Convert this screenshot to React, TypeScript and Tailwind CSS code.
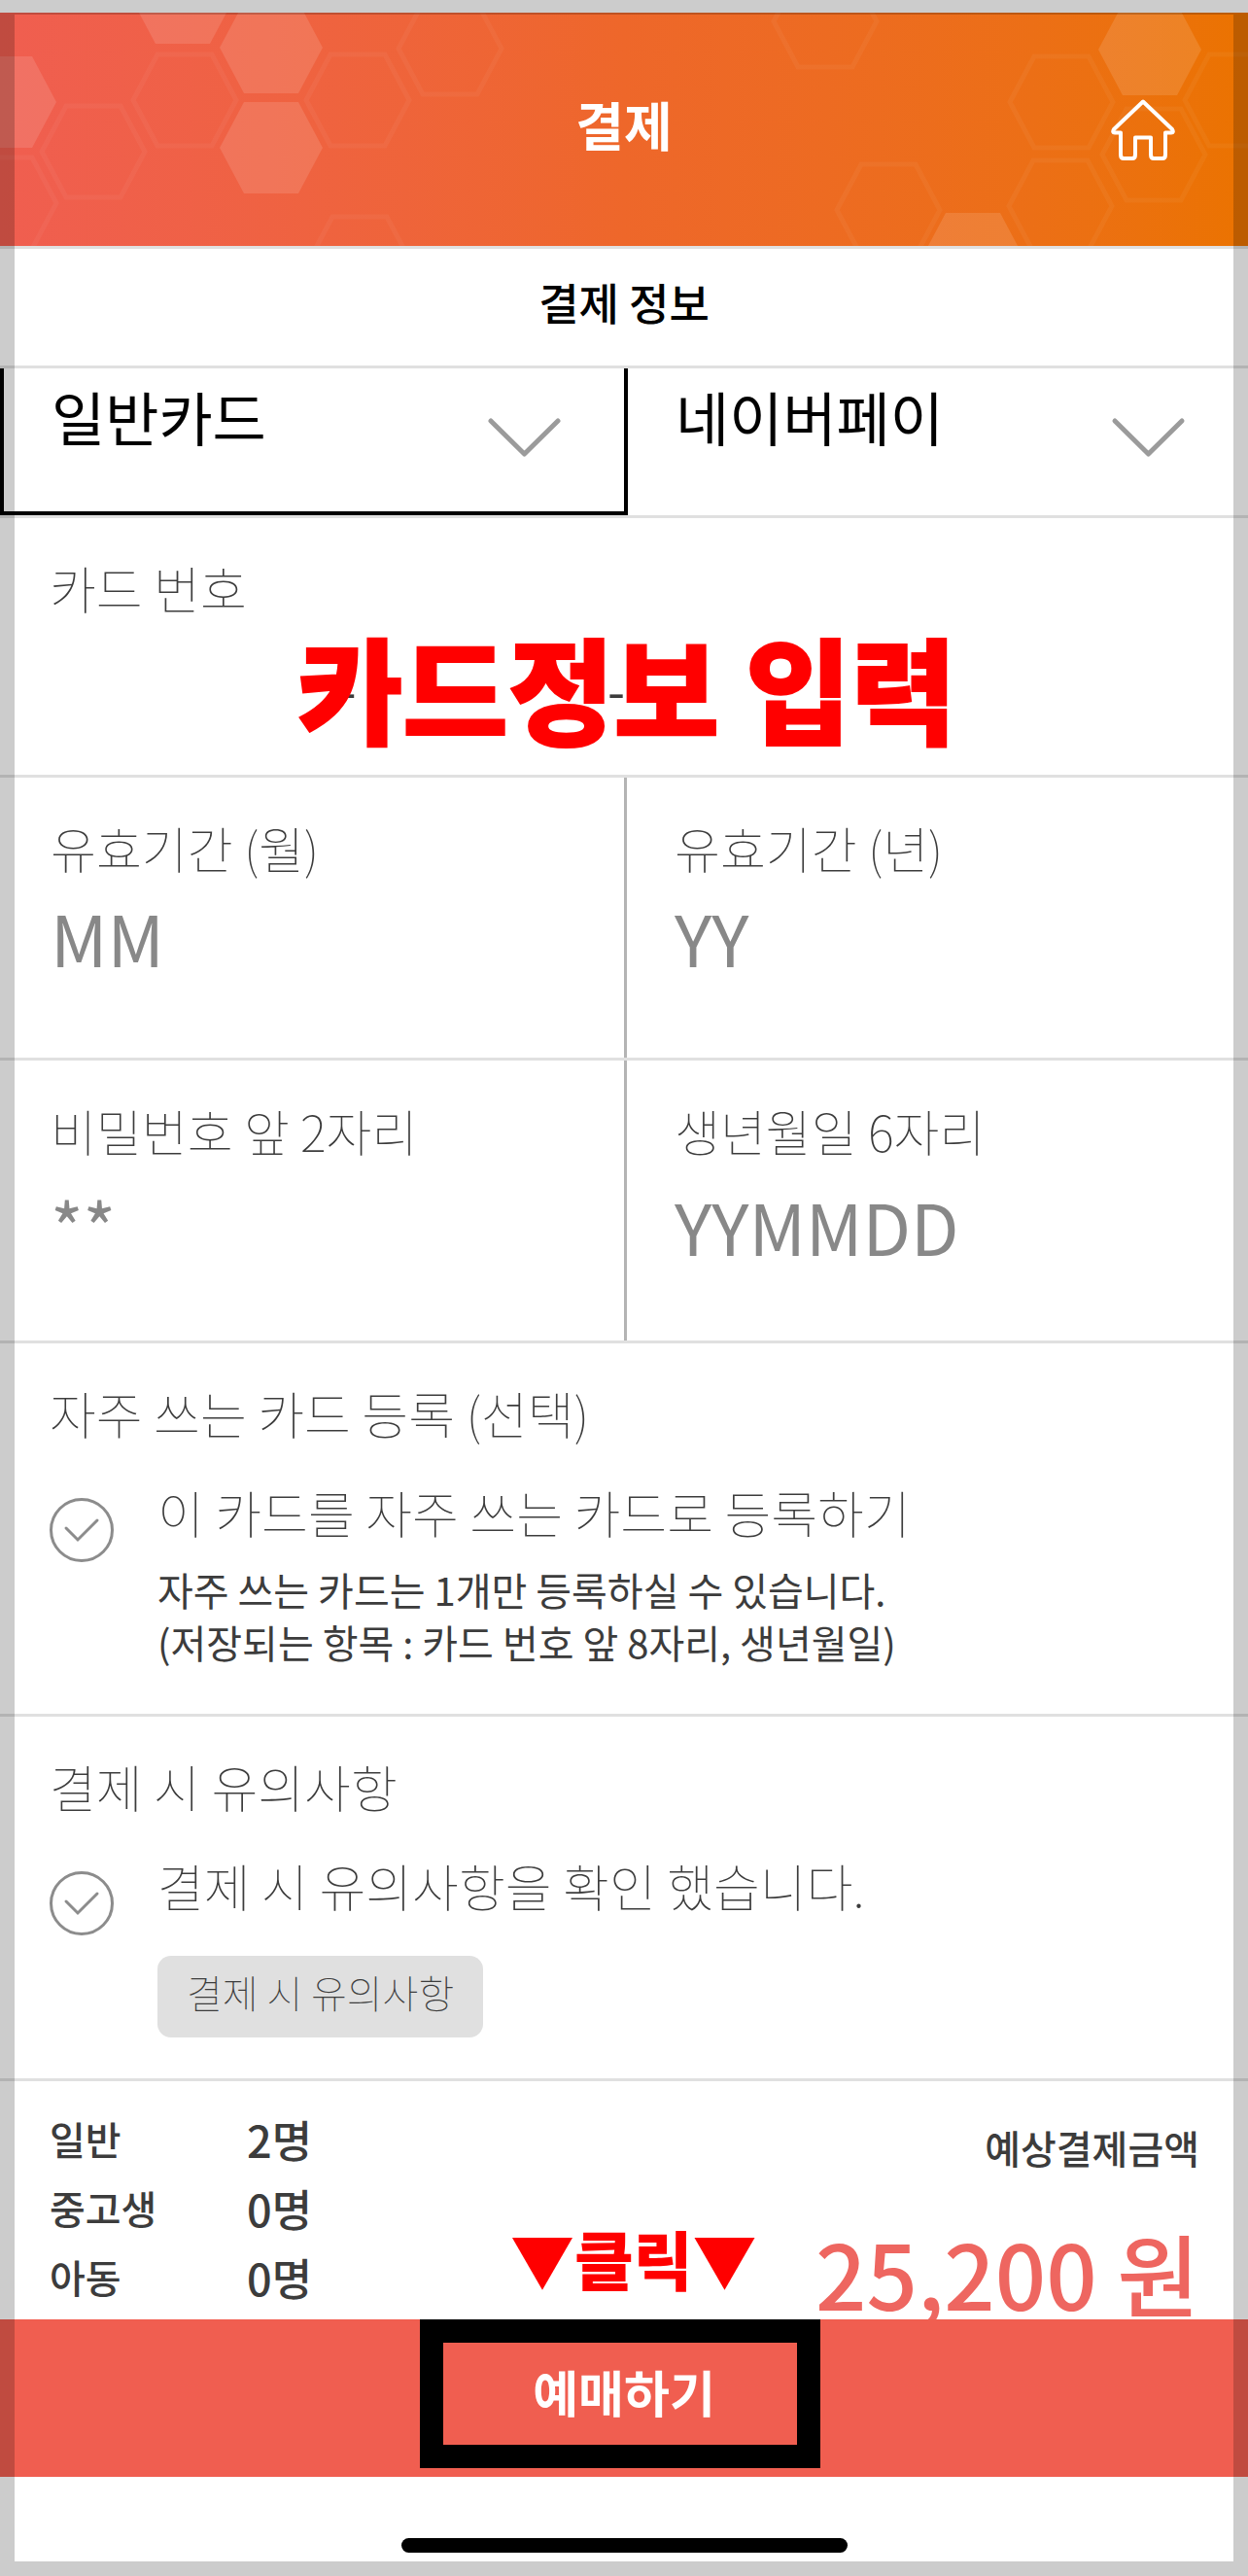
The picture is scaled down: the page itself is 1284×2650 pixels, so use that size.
import { ReactNode, useState } from "react";

const outlineHexagons = [
  [190, 90],
  [96, 143],
  [368, 90],
  [463, 37],
  [370, 257],
  [5, 196],
  [849, 9],
  [1092, 92],
  [914, 203],
  [1091, 199],
  [1187, 146],
  [1272, 90],
];

const filledHexagons = [
  [279, 36],
  [279, 139],
  [188, -15],
  [5, 92],
  [1183, 38],
  [1001, 253],
];

const people = [
  { name: "일반", count: 2 },
  { name: "중고생", count: 0 },
  { name: "아동", count: 0 },
];

const HEX = "M-53 0 L-28 -47 H28 L53 0 L28 47 H-28 Z";

function HeaderPattern() {
  return (
    <svg
      className="absolute inset-0 h-full w-full"
      viewBox="0 0 1284 240"
      preserveAspectRatio="xMidYMid slice"
      aria-hidden="true"
    >
      {filledHexagons.map(([x, y]) => (
        <path key={`${x}-${y}`} d={HEX} transform={`translate(${x} ${y})`} fill="#fff" fillOpacity="0.12" />
      ))}
      {outlineHexagons.map(([x, y]) => (
        <path
          key={`${x}-${y}`}
          d={HEX}
          transform={`translate(${x} ${y})`}
          fill="none"
          stroke="#fff"
          strokeOpacity="0.045"
          strokeWidth="5"
        />
      ))}
    </svg>
  );
}

function HomeIcon() {
  return (
    <svg width="66" height="63" viewBox="0 0 66 63" fill="none" stroke="#fff" strokeWidth="4" strokeLinejoin="round">
      <path d="M33 2.5 L3 31 Q1 34.500 4 34.500 H10 V57 Q10 61 13 61 H22 Q25 61 25 57 V39.500 H41 V57 Q41 61 44 61 H53 Q56 61 56 57 V34.500 H62 Q65 34.500 63 31 Z" />
    </svg>
  );
}

function PaySelect({ label, selected }: { label: string; selected?: boolean }) {
  return (
    <div className="relative">
      <select
        aria-label={label}
        className="block h-[151px] w-full appearance-none bg-transparent pb-[54px] pl-[53px] text-[60px] text-black outline-none"
      >
        <option>{label}</option>
      </select>
      <svg
        className="pointer-events-none absolute right-16 top-[50px]"
        width="77"
        height="43"
        viewBox="0 0 77 43"
        fill="none"
        stroke="#9b9b9b"
        strokeWidth="5"
        strokeLinecap="round"
        strokeLinejoin="round"
        aria-hidden="true"
      >
        <path d="M4 4 L38.500 38 L73 4" />
      </svg>
      {selected && (
        <div className="pointer-events-none absolute inset-y-0 -right-1 left-0 z-10 border-x-4 border-b-4 border-black" />
      )}
    </div>
  );
}

function SectionTitle({ children }: { children: ReactNode }) {
  return <h2 className="text-[52px] font-thin leading-[76px]">{children}</h2>;
}

function Field({ id, label, placeholder, className }: { id: string; label: string; placeholder: string; className: string }) {
  return (
    <div className="border-l-[3px] border-[#b4b4b4] pl-[49px] pt-[34px] first:border-transparent">
      <label htmlFor={id} className="block text-[51px] font-thin leading-[76px]">
        {label}
      </label>
      <input
        id={id}
        placeholder={placeholder}
        className={`block h-[100px] w-full bg-transparent text-[72px] outline-none placeholder:text-[#888] ${className}`}
      />
    </div>
  );
}

function CheckRow({ id, label, children }: { id: string; label: string; children: ReactNode }) {
  const [checked, setChecked] = useState(false);

  return (
    <div className="mt-[26px] flex gap-[45px]">
      <div className="relative mt-[23px] h-[66px] w-[66px] shrink-0">
        <input
          id={id}
          type="checkbox"
          checked={checked}
          onChange={(e) => setChecked(e.target.checked)}
          className="block h-full w-full appearance-none rounded-full border-[3px] border-[#8c8c8c] checked:border-[#ef5e50]"
        />
        <svg
          className="pointer-events-none absolute inset-0"
          viewBox="0 0 66 66"
          fill="none"
          stroke={checked ? "#ef5e50" : "#8c8c8c"}
          strokeWidth="3"
          strokeLinecap="round"
          aria-hidden="true"
        >
          <path d="M17 31 L29 43 L49 23" />
        </svg>
      </div>
      <div>
        <label htmlFor={id} className="block text-[52px] font-thin leading-[76px]">
          {label}
        </label>
        {children}
      </div>
    </div>
  );
}

export default function App() {
  return (
    <div className="relative bg-white pt-[13px] font-['Noto_Sans_CJK_KR',sans-serif] text-[#3c3c3c]">
      {/* Header */}
      <header className="relative flex h-[240px] items-center justify-center overflow-hidden bg-linear-to-r from-[#f05e50] via-[#ee672a] to-[#eb7300]">
        <HeaderPattern />
        <h1 className="relative pb-3 text-[54px] font-bold text-white">결제</h1>
        <button type="button" aria-label="홈" className="absolute right-[75px]">
          <HomeIcon />
        </button>
      </header>

      <div className="flex h-[126px] items-center justify-center border-y-[3px] border-[#e0e0e0] pb-2.5 text-[45px] font-medium text-black">
        결제 정보
      </div>

      {/* Payment method */}
      <div className="grid grid-cols-2 border-b-[3px] border-[#e0e0e0]">
        <PaySelect label="일반카드" selected />
        <PaySelect label="네이버페이" />
      </div>

      {/* Card number */}
      <section className="relative border-b-[3px] border-[#e0e0e0] pb-[38px] pt-[34px]">
        <div className="pl-[51px]">
          <SectionTitle>카드 번호</SectionTitle>
        </div>
        <div className="mt-4 flex h-[100px] items-center pl-[90px] pr-[88px] text-[52px]">
          {[1, 2, 3, 4].map((n) => (
            <div key={n} className="flex flex-1 items-center">
              <input aria-label={`카드 번호 ${n}`} maxLength={4} className="h-[100px] w-0 flex-1 bg-transparent text-center outline-none" />
              {n < 4 && <span>-</span>}
            </div>
          ))}
        </div>
        <p className="pointer-events-none absolute inset-x-0 bottom-8 pl-1.5 text-center text-[118px] font-black leading-[118px] text-[#ff0000] [-webkit-text-stroke:2px_#ff0000]">
          카드정보 입력
        </p>
      </section>

      {/* Expiry */}
      <div className="grid grid-cols-2 border-b-[3px] border-[#e0e0e0]">
        <Field id="month" label="유효기간 (월)" placeholder="MM" className="mb-[74px] mt-1" />
        <Field id="year" label="유효기간 (년)" placeholder="YY" className="mb-[74px] mt-1" />
      </div>

      {/* Password and birthday */}
      <div className="grid grid-cols-2 border-b-[3px] border-[#e0e0e0]">
        <Field id="password" label="비밀번호 앞 2자리" placeholder="**" className="mb-[68px] mt-2.5" />
        <Field id="birthday" label="생년월일 6자리" placeholder="YYMMDD" className="mb-[68px] mt-2.5" />
      </div>

      <section className="border-b-[3px] border-[#e0e0e0] pb-[47px] pl-[51px] pt-[34px]">
        <SectionTitle>자주 쓰는 카드 등록 (선택)</SectionTitle>
        <CheckRow id="save-card" label="이 카드를 자주 쓰는 카드로 등록하기">
          <p className="mt-3.5 text-[40px] leading-[54px]">
            자주 쓰는 카드는 1개만 등록하실 수 있습니다.
            <br />
            (저장되는 항목 : 카드 번호 앞 8자리, 생년월일)
          </p>
        </CheckRow>
      </section>

      <section className="border-b-[3px] border-[#e0e0e0] pb-[42px] pl-[51px] pt-[34px]">
        <SectionTitle>결제 시 유의사항</SectionTitle>
        <CheckRow id="notice" label="결제 시 유의사항을 확인 했습니다.">
          <button
            type="button"
            className="mt-[34px] block h-[84px] rounded-[14px] bg-[#e0e0e0] px-[30px] pb-2.5 text-[40px] font-thin"
          >
            결제 시 유의사항
          </button>
        </CheckRow>
      </section>

      {/* Summary */}
      <section className="relative flex justify-between pl-[51px] pr-[50px]">
        <dl className="pb-2 pt-6 font-medium">
          {people.map((p) => (
            <div key={p.name} className="flex h-[71px] items-center leading-[71px]">
              <dt className="w-[203px] text-[40px]">{p.name}</dt>
              <dd className="text-[45px]">{p.count}명</dd>
            </div>
          ))}
        </dl>
        <div className="pt-8 text-right font-medium">
          <p className="text-[40px] leading-[72px]">예상결제금액</p>
          <p className="mt-[43px] text-[92px] leading-[98px] text-[#ee6660]">25,200 원</p>
        </div>
        <p className="absolute bottom-4 left-[525px] text-[66px] font-black leading-[96px] text-[#ff0000]">▼클릭▼</p>
      </section>

      <div className="relative">
        <button type="button" className="block h-[162px] w-full bg-[#f05e50] pb-3.5 text-[51px] font-bold text-white">
          예매하기
        </button>
        {/* Highlight around the button label */}
        <div className="pointer-events-none absolute left-1/2 top-0 -ml-[210px] h-[153px] w-[412px] border-[24px] border-black" />
      </div>

      <div className="flex justify-center pb-6 pt-[63px]">
        <div className="h-[15px] w-[459px] rounded-full bg-black" />
      </div>

      {/* Dimmed edge around the screen */}
      <div className="pointer-events-none absolute inset-0 border-[15px] border-black/20" />
    </div>
  );
}
